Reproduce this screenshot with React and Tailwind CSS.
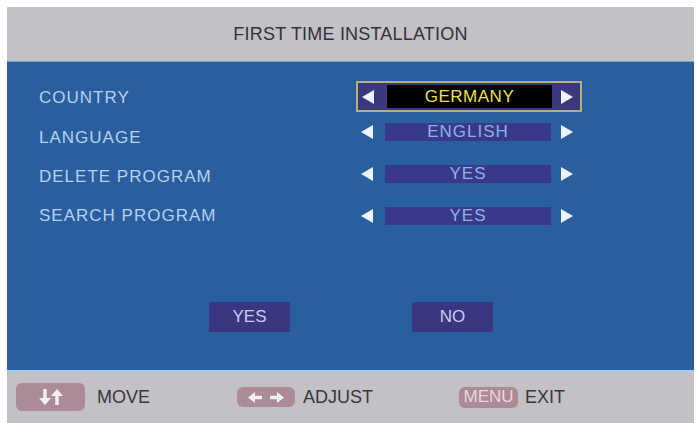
import React from 'react';

const rows = [
  { label: 'COUNTRY', value: 'GERMANY', active: true, h: 'h-[31px]', shift: 'mt-[2px]' },
  { label: 'LANGUAGE', value: 'ENGLISH', h: 'h-[40px]', shift: 'mt-[12px]' },
  { label: 'DELETE PROGRAM', value: 'YES', h: 'h-[43px]', shift: 'mt-[7px]' },
  { label: 'SEARCH PROGRAM', value: 'YES', h: 'h-[41px]', shift: '' },
];

function Arrow({ dir }) {
  return (
    <svg width="12" height="14" viewBox="0 0 12 14" className="shrink-0">
      {dir === 'left'
        ? <polygon points="12,0 12,14 0,7" fill="#eef2fa" />
        : <polygon points="0,0 0,14 12,7" fill="#eef2fa" />}
    </svg>
  );
}

function Selector({ value, active }) {
  if (active) {
    return (
      <div className="w-[226px] h-[31px] border-2 border-[#b3b27e] bg-[#3b397b] flex items-center pl-[4px]">
        <Arrow dir="left" />
        <div className="ml-[13px] w-[165px] h-[23px] bg-black flex items-center justify-center text-[17px] tracking-[0.5px] text-[#ece142]">
          {value}
        </div>
        <div className="ml-[9px]"><Arrow dir="right" /></div>
      </div>
    );
  }
  return (
    <div className="w-[226px] h-[31px] flex items-center pl-[5px]">
      <Arrow dir="left" />
      <div className="ml-[12px] w-[166px] h-[18px] bg-[#39398a] flex items-center justify-center text-[17px] tracking-[1px] text-[#8db3e6]">
        {value}
      </div>
      <div className="ml-[10px]"><Arrow dir="right" /></div>
    </div>
  );
}

function Key({ children, className }) {
  return (
    <div className={`flex items-center justify-center rounded-md bg-[#ab8b95] ${className}`}>
      {children}
    </div>
  );
}

export default function App() {
  return (
    <div className="w-[696px] h-[423px] bg-white pt-[7px] pl-[7px] pr-[2px] font-['Liberation_Sans',Arial,sans-serif] overflow-hidden">
      <div className="flex flex-col h-full">
        {/* Title */}
        <div className="h-[54px] bg-[#c3c1c6] flex items-center justify-center text-[18px] text-[#333336] tracking-[0.2px]">
          FIRST TIME INSTALLATION
        </div>

        {/* Menu */}
        <div className="h-[311px] bg-[#2a5f9f] border-t border-[#7f9fc4] border-b-2 border-b-[#a9c7e6] pt-[19px]">
          {rows.map((r) => (
            <div key={r.label} className={`flex items-center ${r.h}`}>
              <div className={`w-[349px] pl-[32px] text-[17px] tracking-[1px] text-[#b6d1ee] ${r.shift}`}>
                {r.label}
              </div>
              <Selector value={r.value} active={r.active} />
            </div>
          ))}

          <div className="flex mt-[66px] pl-[202px] gap-[122px]">
            <div className="w-[81px] h-[30px] bg-[#3a3682] flex items-center justify-center text-[17px] text-[#cbcbea]">YES</div>
            <div className="w-[81px] h-[30px] bg-[#3a3682] flex items-center justify-center text-[17px] text-[#cbcbea]">NO</div>
          </div>
        </div>

        {/* Help bar */}
        <div className="flex-1 bg-[#c3c1c6] flex items-center pl-[9px] pb-[1px] text-[18px] text-[#38383b]">
          <Key className="w-[69px] h-[28px]">
            <svg width="24" height="18" viewBox="0 0 24 18">
              <path d="M6 1v10" stroke="#f4f0f2" strokeWidth="3.5" />
              <polygon points="0,10 12,10 6,17" fill="#f4f0f2" />
              <path d="M18 17v-10" stroke="#f4f0f2" strokeWidth="3.5" />
              <polygon points="12,8 24,8 18,1" fill="#f4f0f2" />
            </svg>
          </Key>
          <span className="ml-[12px]">MOVE</span>

          <Key className="ml-[87px] w-[58px] h-[20px]">
            <svg width="36" height="11" viewBox="0 0 36 11">
              <polygon points="0,5.5 7,0 7,11" fill="#f4f0f2" />
              <path d="M6 5.5h8" stroke="#f4f0f2" strokeWidth="3.5" />
              <polygon points="36,5.5 29,0 29,11" fill="#f4f0f2" />
              <path d="M22 5.5h8" stroke="#f4f0f2" strokeWidth="3.5" />
            </svg>
          </Key>
          <span className="ml-[8px]">ADJUST</span>

          <Key className="ml-[86px] w-[59px] h-[21px] text-[17px] text-[#ecd6de]">MENU</Key>
          <span className="ml-[7px]">EXIT</span>
        </div>
      </div>
    </div>
  );
}
